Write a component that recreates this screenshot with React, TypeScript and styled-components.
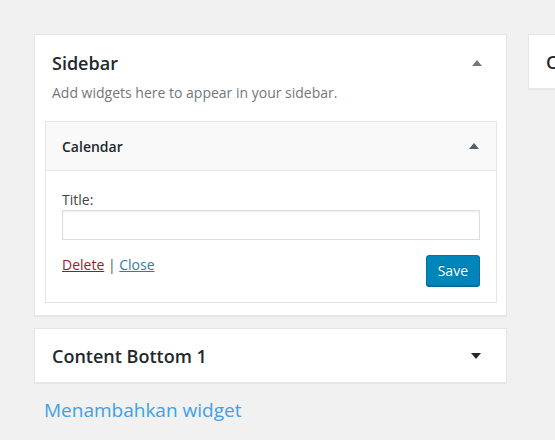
import React from "react";
import styled, { createGlobalStyle } from "styled-components";

const GlobalStyle = createGlobalStyle`
  html, body {
    margin: 0;
    padding: 0;
    background: #f1f1f1;
    overflow: hidden;
    font-family: "Open Sans", "Noto Sans", sans-serif;
    color: #23282d;
  }
`;

const Page = styled.div`
  display: flex;
  align-items: flex-start;
  gap: 21px;
  padding: 34px 0 0 34px;
  width: 1100px;
`;

const Column = styled.div<{ $width: number }>`
  width: ${(p) => p.$width}px;
  display: flex;
  flex-direction: column;
  gap: 12px;
`;

const Area = styled.div<{ $closed?: boolean }>`
  background: #fff;
  border: 1px solid #e5e5e5;
  box-shadow: 0 1px 1px rgba(0, 0, 0, 0.04);
  padding: ${(p) => (p.$closed ? "0" : "0 9px 12px 10px")};
`;

const AreaHeader = styled.div<{ $closed?: boolean }>`
  display: flex;
  align-items: center;
  justify-content: space-between;
  padding: ${(p) => (p.$closed ? "14px 25px 13px 17px" : "15px 15px 0 7px")};
`;

const AreaTitle = styled.h2`
  margin: 0;
  font-size: 18px;
  line-height: 26px;
  font-weight: 600;
  color: #23282d;
  white-space: nowrap;
`;

const AreaDesc = styled.p`
  margin: 7px 0 18px 7px;
  font-size: 14px;
  line-height: 20px;
  color: #72777c;
`;

const Widget = styled.div`
  border: 1px solid #e5e5e5;
  background: #fff;
`;

const WidgetHeader = styled.div`
  display: flex;
  align-items: center;
  justify-content: space-between;
  height: 48px;
  padding: 0 17px 0 16px;
  background: #f9f9f9;
  border-bottom: 1px solid #e5e5e5;
`;

const WidgetTitle = styled.h3`
  margin: 0;
  font-size: 14px;
  font-weight: 600;
  color: #23282d;
`;

const WidgetBody = styled.div`
  padding: 19px 16px 16px 16px;
`;

const Label = styled.label`
  display: block;
  font-size: 14px;
  line-height: 20px;
  color: #444;
`;

const Input = styled.input`
  display: block;
  box-sizing: border-box;
  width: 100%;
  height: 30px;
  margin: 0;
  border: 1px solid #ddd;
  box-shadow: inset 0 1px 2px rgba(0, 0, 0, 0.07);
  background: #fff;
`;

const Actions = styled.div`
  display: flex;
  justify-content: space-between;
  align-items: flex-start;
  margin-top: 15px;
`;

const Links = styled.div`
  font-size: 14px;
  line-height: 20px;
  color: #555;
`;

const Link = styled.a<{ $danger?: boolean }>`
  color: ${(p) => (p.$danger ? "#9a1a1a" : "#2b7ea8")};
  text-decoration: underline;
  cursor: pointer;
`;

const SaveButton = styled.button`
  height: 31px;
  padding: 0 11px;
  font-family: inherit;
  font-size: 14px;
  color: #fff;
  background: #0085ba;
  border: 1px solid #0073aa;
  border-radius: 3px;
  box-shadow: 0 1px 0 #006799;
  text-shadow: 0 -1px 1px #006799;
`;

const AddLink = styled.a`
  margin-left: 10px;
  margin-top: 3px;
  font-size: 19px;
  line-height: 24px;
  color: #42a0e4;
  cursor: pointer;
`;

const Arrow = ({ down, color }: { down?: boolean; color: string }) => (
  <svg width="10" height="6" viewBox="0 0 10 6">
    <polygon points={down ? "0,0 10,0 5,6" : "0,6 10,6 5,0"} fill={color} />
  </svg>
);

export default function App() {
  return (
    <>
      <GlobalStyle />
      <Page>
        <Column $width={473}>
          <Area>
            <AreaHeader>
              <AreaTitle>Sidebar</AreaTitle>
              <Arrow color="#72777c" />
            </AreaHeader>
            <AreaDesc>Add widgets here to appear in your sidebar.</AreaDesc>
            <Widget>
              <WidgetHeader>
                <WidgetTitle>Calendar</WidgetTitle>
                <Arrow color="#555d66" />
              </WidgetHeader>
              <WidgetBody>
                <Label>Title:</Label>
                <Input type="text" />
                <Actions>
                  <Links>
                    <Link $danger>Delete</Link> | <Link>Close</Link>
                  </Links>
                  <SaveButton>Save</SaveButton>
                </Actions>
              </WidgetBody>
            </Widget>
          </Area>
          <Area $closed>
            <AreaHeader $closed>
              <AreaTitle>Content Bottom 1</AreaTitle>
              <Arrow down color="#23282d" />
            </AreaHeader>
          </Area>
          <AddLink>Menambahkan widget</AddLink>
        </Column>
        <Column $width={473}>
          <Area $closed>
            <AreaHeader $closed>
              <AreaTitle>Content Bottom 2</AreaTitle>
              <Arrow down color="#23282d" />
            </AreaHeader>
          </Area>
        </Column>
      </Page>
    </>
  );
}
